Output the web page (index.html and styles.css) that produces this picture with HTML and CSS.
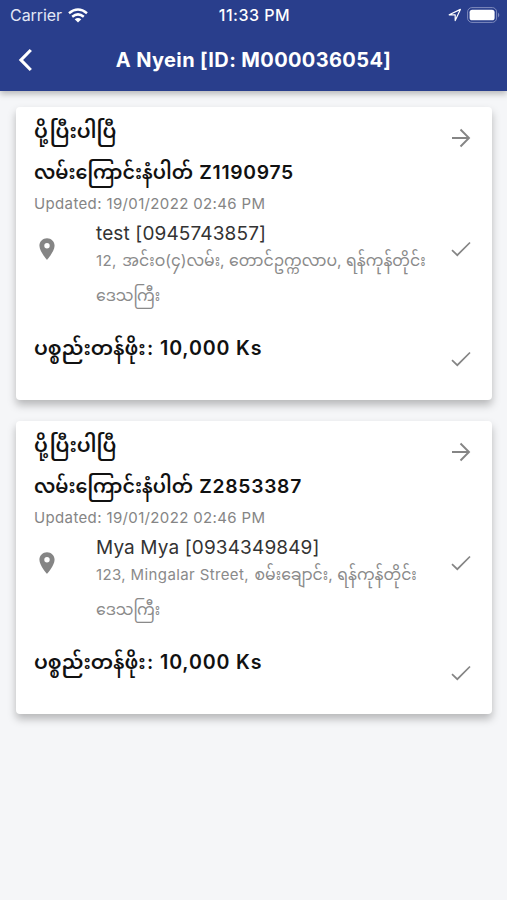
FILE: index.html
```
<!DOCTYPE html>
<html lang="my">
<head><meta charset="utf-8"><title>A Nyein</title><link rel="stylesheet" href="styles.css"></head>
<body>
<svg class="defs" aria-hidden="true">
  <symbol id="arrow" viewBox="0 0 20 20"><path d="M1 10h16.5M9.5 1.5 18 10l-8.500 8.500" fill="none" stroke="#858585" stroke-width="1.9"/></symbol>
  <symbol id="check" viewBox="0 0 20 20"><path d="M1 11.200 6.300 16.200 19 3.500" fill="none" stroke="#858585" stroke-width="1.7"/></symbol>
  <symbol id="pin" viewBox="0 0 24 24"><path fill="#858585" fill-rule="evenodd" d="M12 2C8.100 2 5 5.100 5 9c0 5.300 7 13 7 13s7-7.700 7-13c0-3.900-3.100-7-7-7zm0 9.500a2.500 2.500 0 1 1 0-5 2.500 2.500 0 0 1 0 5z"/></symbol>
</svg>
<header class="header">
  <div class="status">
    <div class="carrier"><span>Carrier</span>
      <svg width="20" height="15" viewBox="0 0 20 15" fill="none" stroke="#fff" stroke-width="2.500"><path d="M1 5.200Q10-2.200 19 5.200M4.200 8.700Q10 4 15.800 8.700"/><path d="M6.700 11.300Q10 8.800 13.300 11.300L10 14.600Z" fill="#fff" stroke="none"/></svg></div>
    <span class="time">11:33 PM</span>
    <div class="indicators">
      <svg width="14" height="14" viewBox="0 0 14 14" fill="none" stroke="#fff" stroke-width="1.200" stroke-linejoin="round"><path d="M1.200 6.800 12.400 1.400 7.200 12.600V6.800Z"/></svg>
      <svg width="33" height="16" viewBox="0 0 33 16"><rect x=".6" y=".6" width="29" height="14.800" rx="4.300" fill="none" stroke="#7f8bbd"/><rect x="2.600" y="2.700" width="25" height="10.600" rx="2.600" fill="#fff"/><path d="M31 5.500q2.600 2.500 0 5z" fill="#7f8bbd"/></svg>
    </div>
  </div>
  <div class="nav">
    <svg class="back" width="15" height="24" viewBox="0 0 15 24" fill="none" stroke="#fff" stroke-width="3.200"><path d="M12.800 2 3 12l9.800 10"/></svg>
    <h1 class="title">A Nyein [ID: M000036054]</h1>
  </div>
</header>
<main class="list">
  <article class="card">
    <section class="summary">
      <div><h2 class="state">ပို့ပြီးပါပြီ</h2><h3 class="number">လမ်းကြောင်းနံပါတ် <span class="latin">Z1190975</span></h3><p class="updated">Updated: 19/01/2022 02:46 PM</p></div>
      <svg class="icon"><use href="#arrow"/></svg>
    </section>
    <section class="recipient">
      <svg class="pin"><use href="#pin"/></svg>
      <div><p class="name">test [0945743857]</p><p class="address"><span class="latin">12, </span>အင်းဝ(၄)လမ်း, တောင်ဥက္ကလာပ, ရန်ကုန်တိုင်း<br>ဒေသကြီး</p></div>
      <svg class="icon"><use href="#check"/></svg>
    </section>
    <section class="total">
      <p class="price">ပစ္စည်းတန်ဖိုး<span class="latin">: 10,000 Ks</span></p>
      <svg class="icon"><use href="#check"/></svg>
    </section>
  </article>
  <article class="card">
    <section class="summary">
      <div><h2 class="state">ပို့ပြီးပါပြီ</h2><h3 class="number">လမ်းကြောင်းနံပါတ် <span class="latin">Z2853387</span></h3><p class="updated">Updated: 19/01/2022 02:46 PM</p></div>
      <svg class="icon"><use href="#arrow"/></svg>
    </section>
    <section class="recipient">
      <svg class="pin"><use href="#pin"/></svg>
      <div><p class="name">Mya Mya [0934349849]</p><p class="address"><span class="latin">123, Mingalar Street, </span>စမ်းချောင်း, ရန်ကုန်တိုင်း<br>ဒေသကြီး</p></div>
      <svg class="icon"><use href="#check"/></svg>
    </section>
    <section class="total">
      <p class="price">ပစ္စည်းတန်ဖိုး<span class="latin">: 10,000 Ks</span></p>
      <svg class="icon"><use href="#check"/></svg>
    </section>
  </article>
</main>
</body>
</html>
```
FILE: styles.css
```
* { box-sizing: border-box; margin: 0; padding: 0; }
body { min-height: 100vh; background: #f5f6f8; color: #111; font-family: Inter, "Noto Sans Myanmar", "Noto Sans", sans-serif; }
svg { display: block; flex: none; }
.defs { display: none; }
.header { background: #293e8c; color: #fff; height: 91px; box-shadow: 0 3px 6px rgba(0,0,0,.25); }
.status { display: grid; grid-template-columns: 1fr auto 1fr; align-items: center; height: 30px; padding: 0 7px 0 10px; font-size: 16px; }
.carrier { display: flex; align-items: center; gap: 6px; color: #e3e7f6; letter-spacing: -.05px; }
.time { font-weight: 500; letter-spacing: .5px; margin-right: 1px; }
.indicators { display: flex; justify-content: flex-end; align-items: center; gap: 5px; }
.nav { display: grid; grid-template-columns: 40px 1fr 40px; align-items: center; height: 60px; }
.back { margin-left: 18px; }
.title { font-size: 20px; font-weight: 700; letter-spacing: .37px; text-align: center; white-space: nowrap; }
.list { display: flex; flex-direction: column; gap: 21px; min-height: 809px; padding: 16px 15px 0 16px; }
.card { height: 293px; padding: 4px 21.500px 0 18px; border-radius: 4px; background: #fff; box-shadow: 0 5px 9px rgba(0,0,0,.26); }
.icon { width: 20px; height: 20px; }
.summary, .total { display: flex; justify-content: space-between; }
.summary { height: 110px; }
.summary .icon { margin-top: 17px; }
.state { height: 41px; font-size: 20px; line-height: 40px; font-weight: 600; }
.number { height: 40px; font-size: 19.100px; line-height: 40px; font-weight: 600; white-space: nowrap; }
.number .latin { margin-left: 1.500px; font-size: 19.300px; letter-spacing: .7px; }
.updated { font-size: 15px; line-height: 24px; letter-spacing: .36px; color: #858585; }
.recipient { display: grid; grid-template-columns: 62px 1fr 20px; height: 107px; }
.recipient .icon { margin-top: 18px; }
.pin { width: 26px; height: 26px; margin-top: 15px; }
.name { height: 22px; font-size: 19px; line-height: 26px; letter-spacing: .13px; color: #333; white-space: nowrap; }
.address { font-size: 15.700px; line-height: 35px; color: #8a8a8a; white-space: nowrap; }
.address .latin { margin-right: 1px; font-size: 15px; letter-spacing: .38px; }
.price { font-size: 20px; line-height: 40px; font-weight: 600; white-space: nowrap; }
.price .latin { margin-left: 1.500px; font-size: 19.600px; letter-spacing: .85px; }
.total .icon { margin-top: 21px; }
```
